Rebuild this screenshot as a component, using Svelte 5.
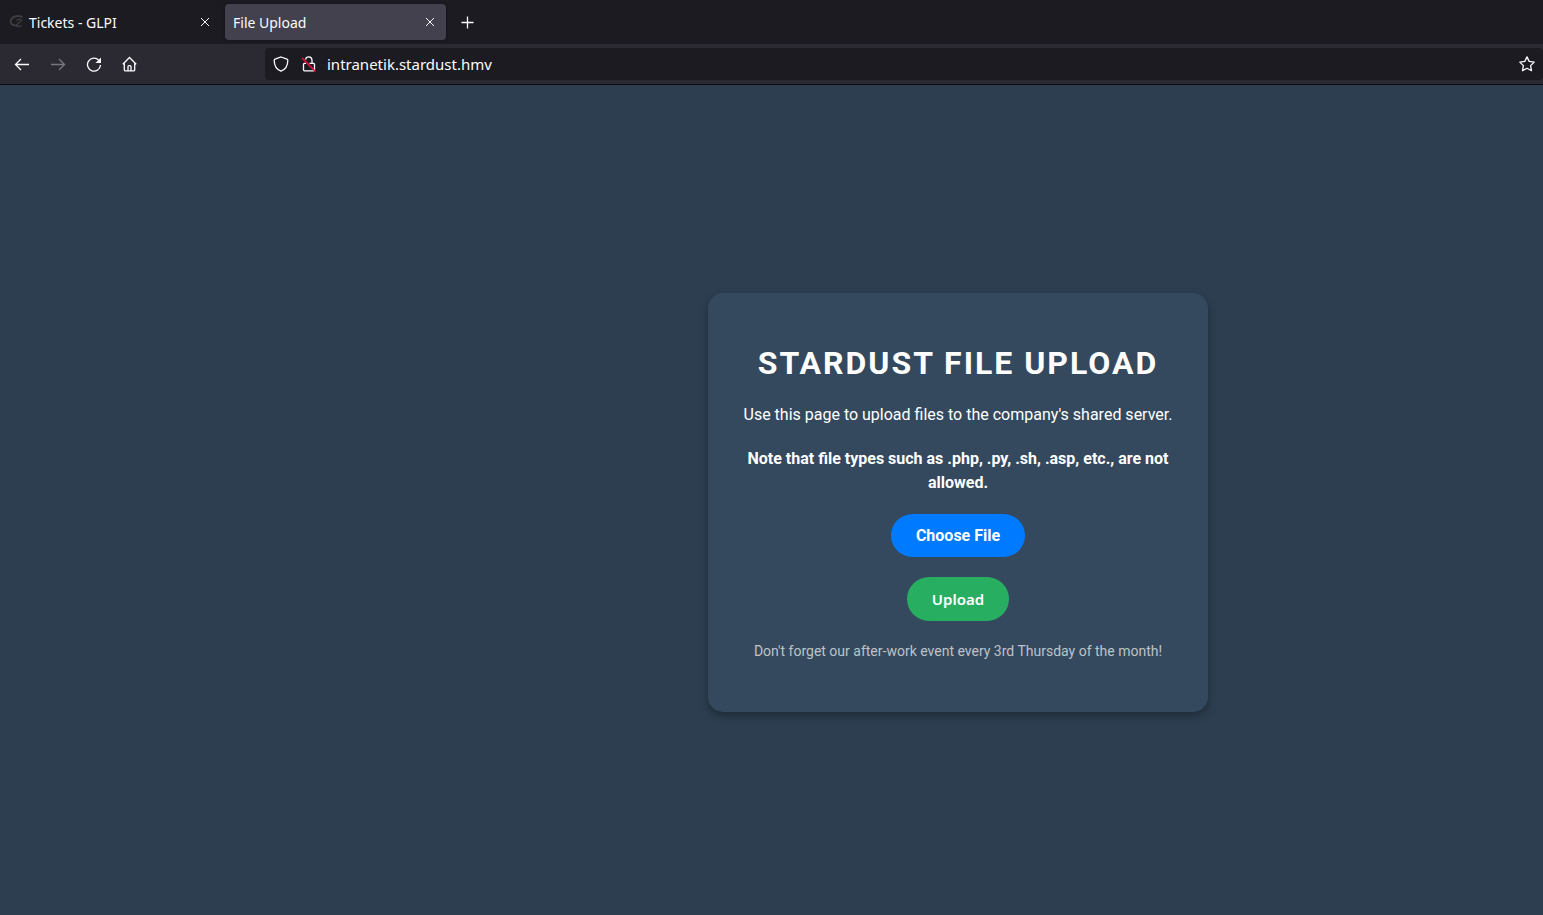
<script>
  let files = $state();
  let url = $state('intranetik.stardust.hmv');
</script>

<div class="window">
  <header>
    <nav class="tabs" aria-label="Tabs">
      <div class="tab">
        <svg class="favicon" width="16" height="16" viewBox="0 0 16 16">
          <path d="M14.500 3.200C10 .8 4.500 2 3 6 1.800 9.800 4.500 12 9 11.200" stroke-width="2" />
          <path d="M8.500 6.800C9.500 5.200 13 5 13.500 6 13.500 7.500 9 9 8.500 12 10 12.800 12.500 12.300 14 11.500" stroke-width="1.400" />
        </svg>
        <button class="title">Tickets - GLPI</button>
        <button class="close" aria-label="Close Tickets - GLPI">
          <svg width="10" height="10" viewBox="0 0 10 10"><path d="M1 1l8 8M9 1L1 9" /></svg>
        </button>
      </div>
      <div class="tab active">
        <button class="title">File Upload</button>
        <button class="close" aria-label="Close File Upload">
          <svg width="10" height="10" viewBox="0 0 10 10"><path d="M1 1l8 8M9 1L1 9" /></svg>
        </button>
      </div>
      <button class="new" aria-label="New tab">
        <svg width="13" height="13" viewBox="0 0 13 13"><path d="M6.500 .5v12M.5 6.500h12" /></svg>
      </button>
    </nav>
    <div class="toolbar">
      <div class="controls">
        <button aria-label="Back">
          <svg width="16" height="16" viewBox="0 0 16 16"><path d="M15 8.500H1.500M7 3L1.500 8.500 7 14" /></svg>
        </button>
        <button aria-label="Forward" disabled>
          <svg width="16" height="16" viewBox="0 0 16 16"><path d="M1 8.500h13.500M9 3L14.500 8.500 9 14" /></svg>
        </button>
        <button aria-label="Reload">
          <svg width="16" height="16" viewBox="0 0 16 16"><path d="M12.800 4.200A6.500 6.500 0 1 0 14.500 9" /><path class="solid" d="M15 1.500V7H9.500z" /></svg>
        </button>
        <button aria-label="Home">
          <svg width="16" height="16" viewBox="0 0 16 16"><path d="M.8 8.200L7.500 1.500l6.700 6.700M2.300 7v6.700q0 1.200 1.200 1.200h8q1.200 0 1.200-1.200V7M6 14.700v-4q0-1 1-1h1q1 0 1 1v4" /></svg>
        </button>
      </div>
      <div class="address">
        <button aria-label="Tracking protection">
          <svg width="16" height="16" viewBox="0 0 16 16"><path d="M8 1l6 2.200q.8.300.800 1.100C14.800 9 12.500 13.500 8 15.200 3.500 13.500 1.200 9 1.200 4.300q0-.8.800-1.100z" /></svg>
        </button>
        <button aria-label="Connection is not secure">
          <svg width="16" height="16" viewBox="0 0 16 16"><path d="M4.500 3.500a3.300 3.300 0 0 1 6.500 .5v3M8.500 7.300h4q1 0 1 1v5.500q0 1-1 1H3.500q-1 0-1-1V8.300q0-1 1-1h1.500" /><path class="slash" d="M1 2l13.500 13.500" /></svg>
        </button>
        <input type="text" aria-label="Address" bind:value={url} />
        <button aria-label="Bookmark this page">
          <svg width="16" height="16" viewBox="0 0 16 16"><path d="M8 .9l2.200 4.500 5 .7-3.600 3.500.9 5.100L8 12.300l-4.500 2.400.9-5.100L.8 6.100l5-.7z" stroke-linejoin="round" /></svg>
        </button>
      </div>
    </div>
  </header>

  <main>
    <form class="card" onsubmit={(e) => e.preventDefault()}>
      <h1>STARDUST FILE UPLOAD</h1>
      <p>Use this page to upload files to the company's shared server.</p>
      <p class="note">Note that file types such as .php, .py, .sh, .asp, etc., are not allowed.</p>
      <input class="file" id="file" type="file" bind:files />
      <label class="pill" for="file">Choose File</label>
      <button class="pill upload" type="submit">Upload</button>
      <p class="footnote">Don't forget our after-work event every 3rd Thursday of the month!</p>
    </form>
  </main>
</div>

<style>
  :global(body) {
    margin: 0;
    background: #2c3e50;
  }
  .window {
    display: flex;
    flex-direction: column;
    min-height: 100vh;
    color: #fbfbfe;
    font-family: "Noto Sans", sans-serif;
  }
  button {
    display: flex;
    align-items: center;
    justify-content: center;
    padding: 0;
    border: 0;
    background: none;
    color: inherit;
    font: inherit;
  }
  svg {
    flex: none;
    fill: none;
    stroke: currentColor;
    stroke-width: 1.3;
  }
  .favicon {
    stroke: #3c3c3e;
  }
  .solid {
    fill: currentColor;
    stroke: none;
  }
  .slash {
    stroke: #f0103f;
    stroke-width: 1.6;
  }
  .tabs {
    display: flex;
    gap: 4px;
    height: 44px;
    box-sizing: border-box;
    padding: 4px 0;
    background: #1c1b22;
    font-size: 14px;
  }
  .tab {
    display: flex;
    align-items: center;
    gap: 5px;
    width: 221px;
    box-sizing: border-box;
    padding: 0 4px 0 8px;
    border-radius: 4px;
  }
  .active {
    background: #42414d;
    box-shadow: 0 0 3px #101014;
  }
  .title {
    flex: 1;
    justify-content: flex-start;
  }
  .close {
    width: 24px;
    height: 24px;
  }
  .close svg {
    stroke-width: 1;
  }
  .new {
    width: 35px;
  }
  .toolbar {
    display: flex;
    align-items: center;
    height: 40px;
    background: #2b2a33;
    border-bottom: 1px solid #0c0c0d;
  }
  .controls {
    display: flex;
    gap: 4px;
    flex: 0 0 261px;
    padding-left: 4px;
    box-sizing: border-box;
    margin-right: 4px;
  }
  .controls button {
    width: 32px;
    height: 32px;
    padding-left: 3px;
  }
  .controls button:disabled {
    color: #77767c;
  }
  .address {
    display: flex;
    flex: 1;
    align-items: center;
    height: 32px;
    box-sizing: border-box;
    padding: 0 2px;
    border-radius: 4px;
    background: #1c1b22;
  }
  .address button {
    width: 28px;
    height: 28px;
  }
  .address input {
    flex: 1;
    min-width: 0;
    margin-left: 4px;
    padding: 0;
    border: 0;
    outline: 0;
    background: none;
    color: #fbfbfe;
    font: 15px "Noto Sans", sans-serif;
  }
  main {
    display: flex;
    flex: 1;
    align-items: center;
    justify-content: center;
    padding: 5px 0 0 373px;
    background: #2c3e50;
    font: 16px/24px Roboto, sans-serif;
  }
  .card {
    position: relative;
    display: flex;
    flex-direction: column;
    align-items: center;
    gap: 20px;
    width: 100%;
    max-width: 500px;
    box-sizing: border-box;
    padding: 46px 30px 50px;
    border-radius: 15px;
    background: #34495e;
    box-shadow: 0 4px 8px rgba(0, 0, 0, 0.3);
    color: #fff;
    text-align: center;
  }
  h1 {
    margin: 0 0 -4px;
    font-size: 32px;
    line-height: 48px;
    letter-spacing: 2px;
  }
  p {
    margin: 0;
  }
  .note {
    margin-bottom: -1px;
    font-weight: 700;
  }
  .file {
    position: absolute;
    opacity: 0;
    width: 1px;
    height: 1px;
  }
  .pill {
    padding: 10px 25px;
    border-radius: 25px;
    background: #007bff;
    color: #fff;
    font-weight: 700;
    line-height: 23px;
  }
  .upload {
    background: #27ae60;
    font-family: "Noto Sans", sans-serif;
    font-size: 15px;
    font-weight: 600;
    line-height: 24px;
  }
  .footnote {
    color: #bdc3c7;
    font-size: 14px;
    line-height: 21px;
  }
</style>
